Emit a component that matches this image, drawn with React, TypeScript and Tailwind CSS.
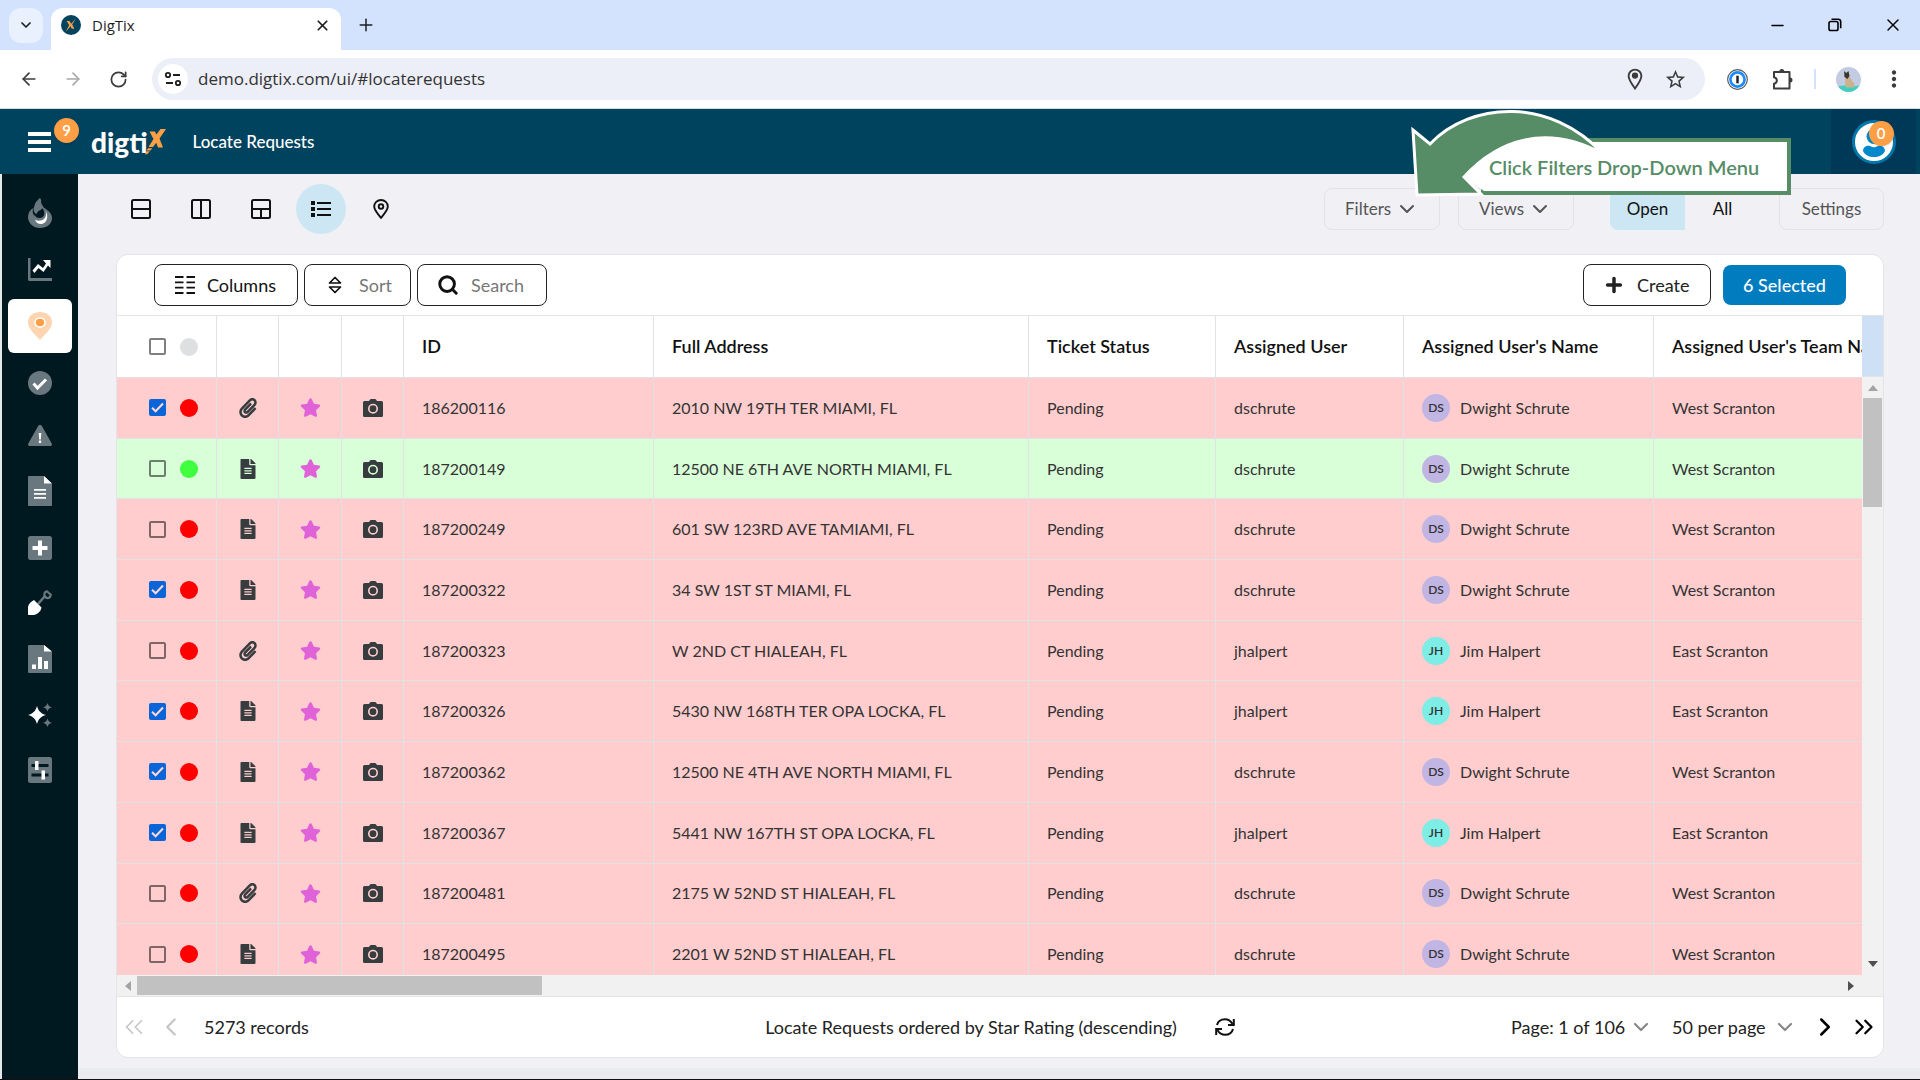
import { useState } from "react";
import type { ReactNode } from "react";
import clsx from "clsx";
import {
  ArrowLeft,
  ArrowRight,
  ChevronDown,
  ChevronLeft,
  ChevronRight,
  ChevronsLeft,
  ChevronsRight,
  Minus,
  Plus,
  RotateCw,
  Search,
  X,
} from "lucide-react";
import { FaFileAlt, FaPaperclip, FaStar } from "react-icons/fa";
import { MdMoreVert, MdOutlineExtension, MdStarBorder } from "react-icons/md";

type Ticket = {
  id: string;
  address: string;
  user: "dschrute" | "jhalpert";
  doc: "clip" | "file";
  checked?: boolean;
  ok?: boolean;
};

const TICKETS: Ticket[] = [
  { id: "186200116", address: "2010 NW 19TH TER MIAMI, FL", user: "dschrute", doc: "clip", checked: true },
  { id: "187200149", address: "12500 NE 6TH AVE NORTH MIAMI, FL", user: "dschrute", doc: "file", ok: true },
  { id: "187200249", address: "601 SW 123RD AVE TAMIAMI, FL", user: "dschrute", doc: "file" },
  { id: "187200322", address: "34 SW 1ST ST MIAMI, FL", user: "dschrute", doc: "file", checked: true },
  { id: "187200323", address: "W 2ND CT HIALEAH, FL", user: "jhalpert", doc: "clip" },
  { id: "187200326", address: "5430 NW 168TH TER OPA LOCKA, FL", user: "jhalpert", doc: "file", checked: true },
  { id: "187200362", address: "12500 NE 4TH AVE NORTH MIAMI, FL", user: "dschrute", doc: "file", checked: true },
  { id: "187200367", address: "5441 NW 167TH ST OPA LOCKA, FL", user: "jhalpert", doc: "file", checked: true },
  { id: "187200481", address: "2175 W 52ND ST HIALEAH, FL", user: "dschrute", doc: "clip" },
  { id: "187200495", address: "2201 W 52ND ST HIALEAH, FL", user: "dschrute", doc: "file" },
];

const USERS = {
  dschrute: { name: "Dwight Schrute", initials: "DS", team: "West Scranton" },
  jhalpert: { name: "Jim Halpert", initials: "JH", team: "East Scranton" },
};

const HEADINGS = [
  "ID",
  "Full Address",
  "Ticket Status",
  "Assigned User",
  "Assigned User's Name",
  "Assigned User's Team Name",
];

/* ---------- browser window ---------- */

function TabStrip() {
  return (
    <div className="flex h-[50px] items-center bg-[#d3e3fd] pl-[9px] text-[#1f1f1f]">
      <button aria-label="Search tabs" className="flex h-[35px] w-[34px] items-center justify-center rounded-xl bg-[#e9f1fe]">
        <ChevronDown size={16} strokeWidth={2.6} />
      </button>
      <div className="ml-2 flex h-[42px] w-[290px] items-center self-end rounded-t-xl bg-white px-[10px] pb-2">
        <svg width="20" height="20" viewBox="0 0 20 20">
          <circle cx="10" cy="10" r="10" fill="#00435f" />
          <path d="M5.500 6h3l1.700 2.800L14.800 3.500 11.200 9.600l2.200 4.200h-2.600L9.500 11.200 4.800 16.800l3.400-6.700z" fill="#fe9f46" />
        </svg>
        <span className="ml-[11px] text-[15px]">DigTix</span>
        <button aria-label="Close tab" className="ml-auto">
          <X size={17} strokeWidth={2.4} />
        </button>
      </div>
      <button aria-label="New tab" className="ml-[15px]">
        <Plus size={20} strokeWidth={1.8} />
      </button>
      <div className="ml-auto flex items-center gap-[38px] pr-[17px] text-black">
        <button aria-label="Minimize">
          <Minus size={19} strokeWidth={1.8} />
        </button>
        <button aria-label="Restore">
          <svg width="20" height="20" viewBox="0 0 20 20" fill="none" stroke="currentColor" strokeWidth="1.600">
            <rect x="4" y="6.500" width="9" height="9" rx="1.800" />
            <path d="M6.500 4.200h6.600a2.600 2.600 0 0 1 2.600 2.600v6.400" />
          </svg>
        </button>
        <button aria-label="Close">
          <X size={20} strokeWidth={1.7} />
        </button>
      </div>
    </div>
  );
}

function AddressBar() {
  return (
    <div className="flex h-[59px] items-center border-b border-[#d5dedd] bg-white pl-[19px] text-[#3c3c3c]">
      <button aria-label="Back"><ArrowLeft size={20} /></button>
      <button aria-label="Forward" className="ml-6 text-[#a9a9a9]"><ArrowRight size={20} /></button>
      <button aria-label="Reload" className="ml-[26px]"><RotateCw size={19} strokeWidth={2.2} /></button>
      <div className="ml-6 flex h-[42px] flex-1 items-center rounded-full bg-[#eceef8] pl-[6px] pr-[18px]">
        <button aria-label="Site information" className="flex h-[30px] w-[30px] items-center justify-center rounded-full bg-white">
          <svg width="18" height="18" viewBox="0 0 18 18" fill="none" stroke="#1f1f1f" strokeWidth="1.800">
            <circle cx="4" cy="5" r="2.200" />
            <path d="M9 5h7M2 13h7" />
            <circle cx="14" cy="13" r="2.200" />
          </svg>
        </button>
        <input
          aria-label="Address"
          defaultValue="demo.digtix.com/ui/#locaterequests"
          className="ml-[10px] flex-1 bg-transparent text-[17px] text-[#333] outline-none"
        />
        <button aria-label="Location">
          <svg width="16" height="22" viewBox="0 0 16 22" fill="none" stroke="#3c3c3c" strokeWidth="1.900">
            <path d="M8 20.500C4 15 1.600 11.500 1.600 8a6.400 6.400 0 0 1 12.800 0c0 3.500-2.400 7-6.400 12.500z" />
            <circle cx="8" cy="7.600" r="2.200" fill="#3c3c3c" />
          </svg>
        </button>
        <button aria-label="Bookmark" className="ml-[21px]"><MdStarBorder size={23} /></button>
      </div>
      <button aria-label="Password manager" className="ml-[22px]">
        <svg width="21" height="21" viewBox="0 0 22 22">
          <circle cx="11" cy="11" r="10.300" fill="#fff" stroke="#555" strokeWidth="1.200" />
          <circle cx="11" cy="11" r="7.400" fill="#fff" stroke="#1a8cff" strokeWidth="2.800" />
          <path d="M11 7v8" stroke="#222" strokeWidth="2.600" />
        </svg>
      </button>
      <button aria-label="Extensions" className="ml-6">
        <svg width="22" height="24" viewBox="0 0 22 24" fill="none" stroke="#3c3c3c" strokeWidth="2">
          <path d="M2 5h15.500v16.500H2v-4.700c3.800-.800 3.800-5.800 0-6.600z" strokeLinejoin="round" />
          <path d="M7.300 4.500a2.500 2.500 0 0 1 5 0zM18 10.500a2.500 2.500 0 0 1 0 5z" fill="#3c3c3c" stroke="none" />
        </svg>
      </button>
      <span className="ml-5 h-5 w-[2px] bg-[#d3e3fd]" />
      <button aria-label="Profile" className="ml-5">
        <svg width="25" height="25" viewBox="0 0 25 25">
          <clipPath id="pic"><circle cx="12.500" cy="12.500" r="12.500" /></clipPath>
          <g clipPath="url(#pic)">
            <path d="M0 0h25v25H0z" fill="#c3cbe3" />
            <path d="M0 20c4-1.500 8-2 12-1 4 .600 9 0 13-1v8H0z" fill="#42cfc0" />
            <path d="M10 9c3-.500 5 2 6 5 2.500 1.500 3 4.500 2 6.500h-8c-1-3-1.500-7.500 0-11.500z" fill="#c9b28c" />
            <path d="M8 4l2.200 2L12.500 4l1 5-2 3-3-2z" fill="#3c342e" />
          </g>
        </svg>
      </button>
      <button aria-label="Menu" className="ml-5 mr-[13px]"><MdMoreVert size={26} /></button>
    </div>
  );
}

/* ---------- app header ---------- */

function Badge({ children, className }: { children: ReactNode; className: string }) {
  return (
    <span
      className={clsx(
        "absolute flex h-[25px] w-[25px] items-center justify-center rounded-full bg-[#fe9f46] text-[15px] font-semibold text-white shadow",
        className,
      )}
    >
      {children}
    </span>
  );
}

function AppHeader() {
  return (
    <header className="flex h-[65px] items-center bg-[#00435f] pl-7 text-white">
      <button aria-label="Menu" className="relative flex flex-col gap-1">
        <span className="h-1 w-[23px] bg-white" />
        <span className="h-1 w-[23px] bg-white" />
        <span className="h-1 w-[23px] bg-white" />
        <Badge className="-top-[14px] left-[26px]">9</Badge>
      </button>
      <a href="#home" aria-label="digtix" className="ml-10 flex items-center text-[28px] leading-8 font-black">
        digti
        <svg width="21" height="26" viewBox="-3 0 21 26" className="-ml-[3px]">
          <path d="M18 0h-5.500L8.500 5.500 6.800 2.500H1.500l4 7.500-5 8H5l3.200-4.200 1.800 4.700h5L11.500 9.500z" fill="#fe9f46" />
          <path d="M0 19.200h4.300L2.500 21.500h-4zM-1.500 22.300h3.300L-.500 25-3 25.500z" fill="#fe9f46" />
        </svg>
      </a>
      <h1 className="ml-[27px] text-[17px] font-medium">Locate Requests</h1>
      <div className="ml-auto mr-1 flex h-full w-[85px] items-center justify-center bg-[#003857]">
        <button aria-label="Account" className="relative">
          <svg width="44" height="44" viewBox="0 0 44 44">
            <circle cx="22" cy="22" r="20.500" fill="#fff" stroke="#0076ab" strokeWidth="3" />
            <circle cx="22" cy="16.500" r="7.500" fill="#0089cc" />
            <path d="M11 31c0-5 5-6 7-5 3 1.600 5 1.600 8 0 2-1 7 0 7 5-2 4-6 6-11 6s-9-2-11-6z" fill="#0089cc" />
          </svg>
          <Badge className="top-[1px] right-[2px]">0</Badge>
        </button>
      </div>
    </header>
  );
}

/* ---------- sidebar ---------- */

const G = "#69777e";

const NAV: { label: string; icon: ReactNode; active?: boolean }[] = [
  {
    label: "Hot",
    icon: (
      <svg width="24" height="30" viewBox="0 0 24 30">
        <path d="M12 0c3 4-1 6 3 9 5 3.500 9 6 9 11 0 6-5 10-12 10S0 25 0 19c0-4 2-7 5-9-.500 3-.500 6 1.500 8 1.500-5-1-8 .500-12C8 3 10 2 12 0z" fill={G} />
        <path d="M6.500 9c-1.500 6 0 11 5 11s6-5 3.500-9l-3-5z" fill="#001820" />
        <path d="M12 0c-1 5-6 5-6.500 12 1 3 2 4 3 4 1-4 6-4 7-7-2-3-3-5-3.500-9z" fill={G} />
        <path d="M17.500 13c1.500 4 0 7.500-3 9-3 1.300-5.500 1-7.500-.500 1 3.500 4 5 7 4.500C19 25 21 18 17.500 13z" fill="#fff" />
      </svg>
    ),
  },
  {
    label: "Trends",
    icon: (
      <svg width="24" height="23" viewBox="0 0 24 23">
        <path d="M0 0h2.500v20H24v3H1.500A1.500 1.500 0 0 1 0 21.500z" fill={G} />
        <path d="M15 2h7.500v8l-2.500-2.500-4.500 6.500-5-4-4 5-2-2.500L10 6l5 4 3-4.500z" fill="#fff" />
      </svg>
    ),
  },
  {
    label: "Locate requests",
    active: true,
    icon: (
      <svg width="24" height="28" viewBox="0 0 24 28">
        <path d="M12 28C7 22 0 17 0 10.500 0 4 5.500 0 12 0s12 4 12 10.500C24 17 17 22 12 28z" fill="#fed5b0" />
        <ellipse cx="12" cy="10.500" rx="5" ry="4.500" fill="#fe9f46" stroke="#fff" strokeWidth="1.600" />
      </svg>
    ),
  },
  {
    label: "Completed",
    icon: (
      <svg width="24" height="24" viewBox="0 0 24 24">
        <circle cx="12" cy="12" r="12" fill={G} />
        <path d="M5.500 12.500l4 4.500L18 8.500" fill="none" stroke="#fff" strokeWidth="3" />
      </svg>
    ),
  },
  {
    label: "Alerts",
    icon: (
      <svg width="24" height="21" viewBox="0 0 24 21">
        <path d="M12 0c1 0 1.500.500 2 1.300l9.600 17c.700 1.500 0 2.700-1.600 2.700H2C.400 21-.300 19.800.400 18.300l9.600-17C10.500.500 11 0 12 0z" fill={G} />
        <path d="M10.700 8h2.600l-.500 6.500h-1.600zM10.800 15.500h2.400v2.500h-2.400z" fill="#fff" />
      </svg>
    ),
  },
  {
    label: "Documents",
    icon: (
      <svg width="24" height="30" viewBox="0 0 24 30">
        <path d="M1 0h15l8 8v21a1 1 0 0 1-1 1H1a1 1 0 0 1-1-1V1a1 1 0 0 1 1-1z" fill={G} />
        <path d="M16 0l8 7.500h-8zM6 13h12v1.800H6zM6 17h12v1.800H6zM6 21h12v1.800H6z" fill="#fff" />
      </svg>
    ),
  },
  {
    label: "Add",
    icon: (
      <svg width="24" height="24" viewBox="0 0 24 24">
        <rect width="24" height="24" rx="2.500" fill={G} />
        <path d="M4.500 10H10V4.500h4V10h5.500v4H14v5.500h-4V14H4.500z" fill="#fff" />
      </svg>
    ),
  },
  {
    label: "Excavations",
    icon: (
      <svg width="24" height="25" viewBox="0 0 24 25">
        <path d="M10 14l7-8" stroke={G} strokeWidth="2.600" />
        <path d="M16.500 5.500C16 3 17 1.500 19 1.300c1.200 1.200 2.500 2.200 3.800 3.500-.300 2.200-2 3.500-4.500 3.200z" fill="none" stroke={G} strokeWidth="2.200" />
        <path d="M0 24V17.500c0-3 3-6 6-7.500l7.500 7.500C13 21 9 25 5.500 25H1c-.600 0-1-.400-1-1z" fill="#fff" />
      </svg>
    ),
  },
  {
    label: "Reports",
    icon: (
      <svg width="24" height="28" viewBox="0 0 24 28">
        <path d="M1 0h15l8 7v20a1 1 0 0 1-1 1H1a1 1 0 0 1-1-1V1a1 1 0 0 1 1-1z" fill={G} />
        <path d="M16 0l8 6.500h-8zM4 19.500h4V24H4zM10 12h4v12h-4zM16 16h4v8h-4z" fill="#fff" />
      </svg>
    ),
  },
  {
    label: "Assistant",
    icon: (
      <svg width="24" height="24" viewBox="0 0 24 24">
        <path d="M9 3c1.400 5 3.800 7.500 9 9-5.200 1.500-7.600 4-9 9-1.400-5-3.800-7.500-9-9 5.200-1.500 7.600-4 9-9z" fill="#fff" />
        <path d="M19.500 0c.700 2.500 1.700 3.500 4.500 4.300-2.800.800-3.800 1.800-4.500 4.300-.700-2.500-1.700-3.500-4.500-4.300 2.800-.800 3.800-1.800 4.500-4.300zM19.500 15.400c.700 2.500 1.700 3.500 4.500 4.300-2.800.800-3.800 1.800-4.500 4.300-.700-2.500-1.700-3.500-4.500-4.300 2.800-.800 3.800-1.800 4.500-4.300z" fill={G} />
      </svg>
    ),
  },
  {
    label: "Preferences",
    icon: (
      <svg width="24" height="26" viewBox="0 0 24 26">
        <rect width="24" height="26" rx="2.500" fill={G} />
        <path d="M3.500 7h17v3h-17zM3.500 16.500h17v3h-17z" fill="#001820" />
        <path d="M7 4h3.500v9H7zM13.500 13.500H17v9h-3.500z" fill="#fff" />
      </svg>
    ),
  },
];

function Sidebar() {
  return (
    <nav className="flex w-[78px] shrink-0 flex-col items-center border-l-2 border-[#e5e7ea] bg-[#001820] pt-[9px]">
      {NAV.map((n) => (
        <a
          key={n.label}
          href="#nav"
          aria-label={n.label}
          className={clsx(
            "flex w-16 justify-center",
            n.active ? "my-[3px] rounded-md bg-white py-[13px]" : "py-[15px]",
          )}
        >
          {n.icon}
        </a>
      ))}
    </nav>
  );
}

/* ---------- view bar ---------- */

const VIEWS: { label: string; icon: ReactNode }[] = [
  { label: "Rows", icon: <path d="M1 10h18" /> },
  { label: "Columns", icon: <path d="M10 1v18" /> },
  { label: "Split", icon: <path d="M1 10h18M10 10v9" /> },
];

function ViewBar() {
  const box = "flex h-[42px] items-center rounded-lg border border-[#e2e3e7] bg-[#f1f1f5] text-[#555]";
  return (
    <div className="flex items-center pt-[10px] pl-[38px] pr-9 text-[17px]">
      <div className="flex gap-[10px]">
        {VIEWS.map((v) => (
          <button key={v.label} aria-label={v.label} className="flex h-[50px] w-[50px] items-center justify-center">
            <svg width="20" height="20" viewBox="0 0 20 20" fill="none" stroke="#111" strokeWidth="2">
              <rect x="1" y="1" width="18" height="18" rx="1.500" />
              {v.icon}
            </svg>
          </button>
        ))}
        <button aria-label="List" className="flex h-[50px] w-[50px] items-center justify-center rounded-full bg-[#cce6f3]">
          <svg width="20" height="16" viewBox="0 0 20 16" fill="#111">
            <path d="M0 0h4v4H0zM0 6h4v4H0zM0 12h4v4H0zM6 1h14v2H6zM6 7h14v2H6zM6 13h14v2H6z" />
          </svg>
        </button>
        <button aria-label="Map" className="flex h-[50px] w-[50px] items-center justify-center">
          <svg width="16" height="20" viewBox="0 0 16 20" fill="none" stroke="#111" strokeWidth="1.900">
            <path d="M8 18.800C4 14 1.200 11 1.200 7.500a6.800 6.500 0 0 1 13.600 0C14.800 11 12 14 8 18.800z" />
            <circle cx="8" cy="7.500" r="2.300" />
          </svg>
        </button>
      </div>
      <div className="ml-auto flex items-center">
        <button className={clsx(box, "w-[116px] gap-1 pl-5")}>
          Filters <ChevronDown size={24} strokeWidth={2} />
        </button>
        <button className={clsx(box, "ml-[18px] w-[116px] gap-1 pl-5")}>
          Views <ChevronDown size={24} strokeWidth={2} />
        </button>
        <button className="ml-[36px] h-[41px] w-[75px] rounded-l-lg bg-[#cce6f3] text-[#111]">Open</button>
        <button className="h-[41px] w-[75px] text-[#111]">All</button>
        <button className={clsx(box, "ml-[19px] w-[105px] justify-center")}>Settings</button>
      </div>
    </div>
  );
}

function Callout() {
  return (
    <div className="pointer-events-none absolute top-[138px] right-[129px] h-[57px] w-[310px] border-4 border-[#568c66] bg-white">
      <svg width="200" height="94" viewBox="0 0 200 94" className="absolute -top-[37px] -left-[79px]">
        <path d="M197 47C150 22 95 28 58 72L78 86H197z" fill="#fff" />
        <path
          d="M7 25L24 39C65-4 145-8 197 49 140 18 92 35 58 72L75 89 11 90z"
          fill="#568c66"
          stroke="#fff"
          strokeWidth="3"
        />
      </svg>
      <span className="relative flex h-full items-center pl-1 text-[20px] font-semibold whitespace-nowrap text-[#568c66]">
        Click Filters Drop-Down Menu
      </span>
    </div>
  );
}

/* ---------- table ---------- */

function CameraIcon() {
  return (
    <svg width="20" height="18" viewBox="0 0 20 18" className="mx-auto">
      <path
        fillRule="evenodd"
        d="M6 2l1-1.500Q7.300 0 8 0h4q.700 0 1 .500L14 2h4.500A1.500 1.500 0 0 1 20 3.500v13a1.500 1.500 0 0 1-1.500 1.500h-17A1.500 1.500 0 0 1 0 16.500v-13A1.500 1.500 0 0 1 1.500 2zM10 4.700a5 5 0 1 0 0 10 5 5 0 0 0 0-10zm0 1.600a3.400 3.400 0 1 1 0 6.800 3.400 3.400 0 0 1 0-6.800z"
        fill="#373c3f"
      />
    </svg>
  );
}

function Tick({ checked, label, onChange }: { checked: boolean; label: string; onChange: () => void }) {
  return (
    <label className="relative block h-[17px] w-[17px]">
      <input
        type="checkbox"
        aria-label={label}
        checked={checked}
        onChange={onChange}
        className="block h-[17px] w-[17px] appearance-none rounded-[2px] border-2 border-[#00000080] checked:border-[#0b65d8] checked:bg-[#0b65d8]"
      />
      {checked && (
        <svg viewBox="0 0 17 17" className="absolute inset-0" fill="none" stroke="#ffd8d8" strokeWidth="2">
          <path d="M3 8.800l3.600 3.500L14 4.500" />
        </svg>
      )}
    </label>
  );
}

function TicketTable() {
  const [selected, setSelected] = useState(TICKETS.filter((t) => t.checked).map((t) => t.id));

  const toggle = (id: string) =>
    setSelected((s) => (s.includes(id) ? s.filter((x) => x !== id) : [...s, id]));

  const cell = "border-r border-b border-[#e3e1e4]";

  return (
    <table className="h-[669px] w-[1786px] table-fixed border-separate border-spacing-0 text-left text-[16px] text-[#333]">
      <colgroup>
        <col className="w-[100px]" />
        <col className="w-[62px]" />
        <col className="w-[63px]" />
        <col className="w-[62px]" />
        <col className="w-[250px]" />
        <col className="w-[375px]" />
        <col className="w-[187px]" />
        <col className="w-[188px]" />
        <col className="w-[250px]" />
        <col className="w-[249px]" />
      </colgroup>
      <thead>
        <tr className="h-[62px] text-[18px] text-[#111]">
          <th className={cell}>
            <div className="flex items-center gap-[14px] pl-8">
              <Tick
                label="Select all"
                checked={selected.length === TICKETS.length}
                onChange={() => setSelected(selected.length === TICKETS.length ? [] : TICKETS.map((t) => t.id))}
              />
              <span className="h-[18px] w-[18px] rounded-full bg-[#dddfe1]" />
            </div>
          </th>
          <th className={cell} />
          <th className={cell} />
          <th className={cell} />
          {HEADINGS.map((h) => (
            <th key={h} className={clsx(cell, "pl-[18px] font-semibold whitespace-nowrap")}>
              {h}
            </th>
          ))}
        </tr>
      </thead>
      <tbody>
        {TICKETS.map((t) => {
          const u = USERS[t.user];
          return (
            <tr key={t.id} className={t.ok ? "bg-[#d8ffd8]" : "bg-[#ffcdcd]"}>
              <td className={cell}>
                <div className="flex items-center gap-[14px] pl-8">
                  <Tick label={`Select ${t.id}`} checked={selected.includes(t.id)} onChange={() => toggle(t.id)} />
                  <span className={clsx("h-[18px] w-[18px] rounded-full", t.ok ? "bg-[#3fff3f]" : "bg-[#fe0000]")} />
                </div>
              </td>
              <td className={cell}>
                {t.doc === "clip" ? (
                  <FaPaperclip size={20} className="mx-auto text-[#373c3f]" />
                ) : (
                  <FaFileAlt size={20} className="mx-auto text-[#373c3f]" />
                )}
              </td>
              <td className={cell}>
                <FaStar size={21} className="mx-auto text-[#e062d9]" />
              </td>
              <td className={cell}>
                <CameraIcon />
              </td>
              <td className={clsx(cell, "pl-[18px]")}>{t.id}</td>
              <td className={clsx(cell, "pl-[18px]")}>{t.address}</td>
              <td className={clsx(cell, "pl-[18px]")}>Pending</td>
              <td className={clsx(cell, "pl-[18px]")}>{t.user}</td>
              <td className={clsx(cell, "pl-[18px]")}>
                <div className="flex items-center gap-[10px]">
                  <span
                    className={clsx(
                      "flex h-[28px] w-[28px] items-center justify-center rounded-full text-[12px] font-semibold",
                      t.user === "dschrute" ? "bg-[#c1b5e3]" : "bg-[#7eede5]",
                    )}
                  >
                    {u.initials}
                  </span>
                  {u.name}
                </div>
              </td>
              <td className={clsx(cell, "pl-[18px]")}>{u.team}</td>
            </tr>
          );
        })}
      </tbody>
    </table>
  );
}

function Toolbar() {
  const outline = "flex h-[42px] items-center rounded-lg border border-[#222] bg-white";
  return (
    <div className="flex h-[61px] shrink-0 items-center border-b border-[#e3e4e7] px-[37px] text-[18px]">
      <div className="flex gap-[6px]">
        <button className={clsx(outline, "w-[144px] gap-3 pl-5 text-[#111]")}>
          <svg width="20" height="18" viewBox="0 0 20 18" stroke="#111" strokeWidth="1.800">
            <path d="M0 1h8.500M0 6.300h8.500M0 11.600h8.500M0 17h8.500M11.500 1H20M11.500 6.300H20M11.500 11.600H20M11.500 17H20" />
          </svg>
          Columns
        </button>
        <button className={clsx(outline, "w-[107px] gap-4 pl-[22px] text-[#777]")}>
          <svg width="16" height="18" viewBox="0 0 16 18" fill="none" stroke="#111" strokeWidth="1.700" strokeLinejoin="round">
            <path d="M8 1.500L13.500 7h-11zM8 16.500L13.500 11h-11z" />
          </svg>
          Sort
        </button>
        <button className={clsx(outline, "w-[130px] gap-3 pl-[19px] text-[#777]")}>
          <Search size={22} strokeWidth={3.2} color="#111" />
          Search
        </button>
      </div>
      <div className="ml-auto flex items-center gap-3">
        <button className={clsx(outline, "w-[128px] gap-3 pl-[19px] text-[#222]")}>
          <Plus size={22} strokeWidth={3.8} />
          Create
        </button>
        <button className="h-10 w-[123px] rounded-lg bg-[#007cbf] font-medium text-white">6 Selected</button>
      </div>
    </div>
  );
}

function Pager() {
  const select = "h-8 appearance-none bg-transparent outline-none";
  const arrow = "pointer-events-none absolute top-1 right-0 text-[#888]";
  return (
    <div className="grid h-[61px] shrink-0 grid-cols-[1fr_auto_1fr] items-center border-t border-[#e3e4e7] text-[18px] text-[#222]">
      <div className="flex items-center pl-[2px]">
        <button aria-label="First page" className="text-[#c4c7ca]"><ChevronsLeft size={30} strokeWidth={1.4} /></button>
        <button aria-label="Previous page" className="ml-[7px] text-[#c4c7ca]"><ChevronLeft size={30} strokeWidth={1.8} /></button>
        <span className="ml-[18px]">5273 records</span>
      </div>
      <div className="flex items-center">
        Locate Requests ordered by Star Rating (descending)
        <button aria-label="Refresh" className="ml-[38px]">
          <svg width="20" height="18" viewBox="0 0 20 18" fill="none" stroke="#111" strokeWidth="2">
            <path d="M2 7C3 3.200 6.200 1.200 10 1.200c3.200 0 5.800 1.800 7.600 4.800M18 11c-1 3.800-4.200 5.800-8 5.800-3.200 0-5.800-1.800-7.600-4.800" />
            <path d="M18.800 1v6H13M1.200 17v-6H7" />
          </svg>
        </button>
      </div>
      <div className="flex items-center justify-end pr-1">
        <label className="relative">
          <select aria-label="Page" className={clsx(select, "w-[142px]")}>
            <option>Page: 1 of 106</option>
          </select>
          <ChevronDown size={24} strokeWidth={2.2} className={arrow} />
        </label>
        <label className="relative ml-[19px]">
          <select aria-label="Page size" className={clsx(select, "w-[125px]")}>
            <option>50 per page</option>
          </select>
          <ChevronDown size={24} strokeWidth={2.2} className={arrow} />
        </label>
        <button aria-label="Next page" className="ml-[13px] text-black"><ChevronRight size={30} strokeWidth={2} /></button>
        <button aria-label="Last page" className="ml-[9px] text-black"><ChevronsRight size={30} strokeWidth={1.8} /></button>
      </div>
    </div>
  );
}

function Requests() {
  return (
    <section className="mt-5 mr-9 ml-[38px] flex min-h-0 flex-1 flex-col overflow-hidden rounded-xl border border-[#e3e4e8] bg-white">
      <Toolbar />
      <div className="flex min-h-0 flex-1">
        <div className="min-w-0 flex-1 overflow-hidden">
          <TicketTable />
        </div>
        <div className="flex w-[21px] shrink-0 flex-col items-center bg-[#f1f1f1]">
          <div className="h-[61px] w-full shrink-0 border-b border-[#e3e4e7] bg-[#cde0f6]" />
          <span className="mt-2 border-x-[5px] border-b-[6px] border-x-transparent border-b-[#a3a3a3]" />
          <span className="mt-[7px] h-[109px] w-[19px] bg-[#c1c1c1]" />
          <span className="mt-auto mb-2 border-x-[5px] border-t-[6px] border-x-transparent border-t-[#4f4f4f]" />
        </div>
      </div>
      <div className="flex h-[21px] shrink-0 items-center bg-[#f1f1f1] pr-[29px] pl-2">
        <span className="border-y-[5px] border-r-[6px] border-y-transparent border-r-[#a3a3a3]" />
        <span className="ml-[6px] h-[19px] w-[405px] bg-[#c1c1c1]" />
        <span className="ml-auto border-y-[5px] border-l-[6px] border-y-transparent border-l-[#4f4f4f]" />
      </div>
      <Pager />
    </section>
  );
}

export default function App() {
  return (
    <div className="relative flex h-screen flex-col overflow-hidden border-b border-[#111] bg-[#f0f0f5] font-['Lato',sans-serif]">
      <div className="font-['Open_Sans',sans-serif]">
        <TabStrip />
        <AddressBar />
      </div>
      <AppHeader />
      <div className="flex min-h-0 flex-1">
        <Sidebar />
        <main className="flex min-w-0 flex-1 flex-col">
          <ViewBar />
          <Requests />
          <div className="mt-[10px] h-[11px] shrink-0 bg-[#eaebef]" />
        </main>
      </div>
      <Callout />
    </div>
  );
}
